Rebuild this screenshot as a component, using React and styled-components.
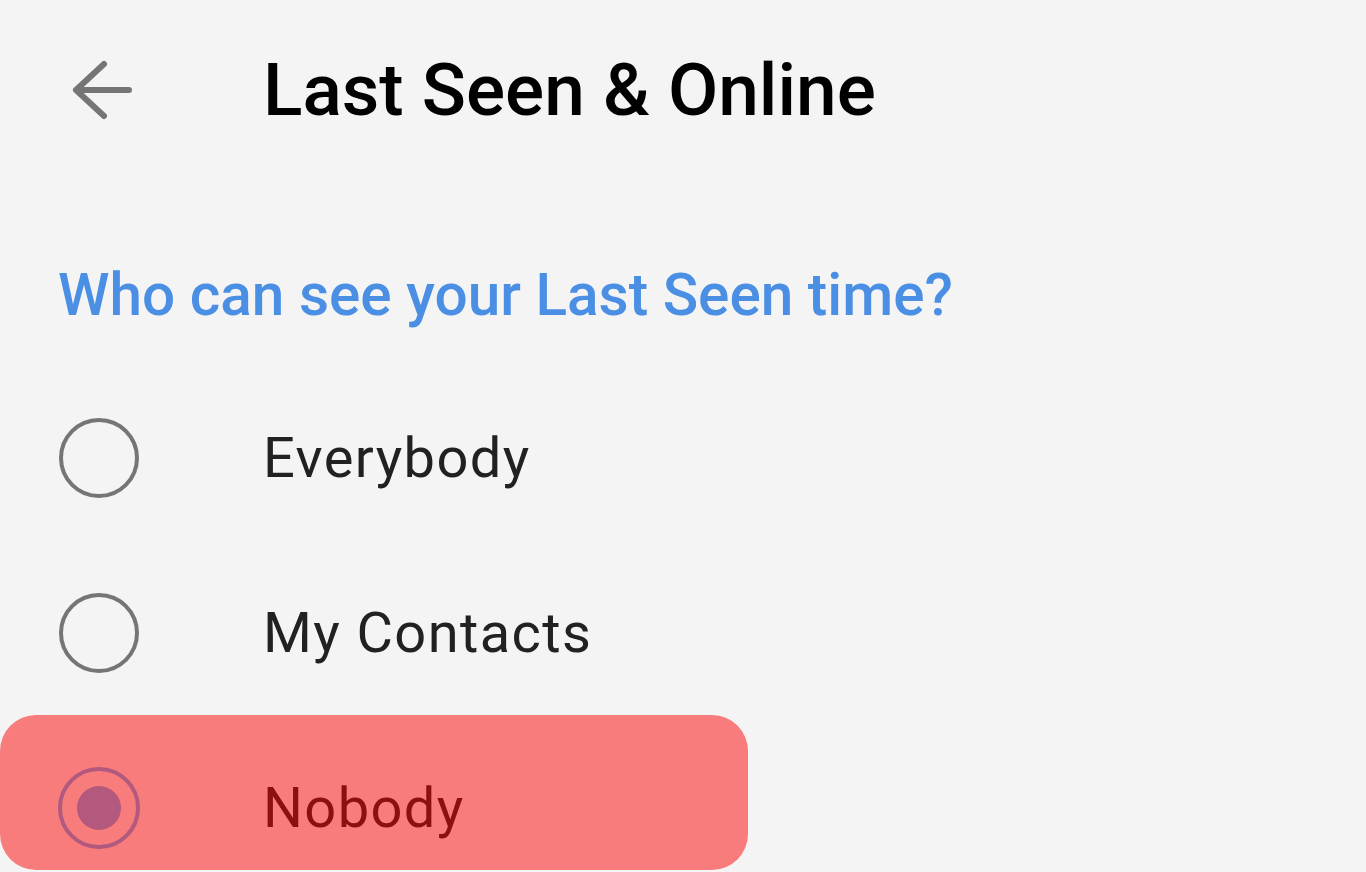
import React from "react";
import styled, { createGlobalStyle } from "styled-components";

const Global = createGlobalStyle`
  html, body {
    margin: 0;
    padding: 0;
    background: #f4f4f4;
  }
  body {
    font-family: Roboto, "Noto Sans", "Liberation Sans", sans-serif;
    overflow: hidden;
  }
`;

const Page = styled.div`
  width: 1366px;
  height: 872px;
  background: #f4f4f4;
  display: flex;
  flex-direction: column;
  overflow: hidden;
  & > * {
    flex-shrink: 0;
  }
`;

const Header = styled.header`
  height: 180px;
  display: flex;
  align-items: center;
  padding-left: 70px;
`;

const BackButton = styled.button`
  width: 64px;
  height: 64px;
  padding: 0;
  border: 0;
  background: transparent;
  display: flex;
  align-items: center;
  justify-content: center;
  cursor: pointer;
`;

const Title = styled.h1`
  margin: 0 0 0 129px;
  font-size: 73px;
  line-height: 73px;
  font-weight: 500;
  color: #000;
  letter-spacing: 0;
`;

const SectionTitle = styled.h2`
  margin: 86px 0 0 0;
  padding-left: 58px;
  font-size: 58.5px;
  line-height: 59px;
  font-weight: 500;
  color: #4a8fe4;
`;

const Options = styled.div`
  margin-top: 45px;
  display: flex;
  flex-direction: column;
`;

const Row = styled.label`
  position: relative;
  height: 175px;
  display: flex;
  align-items: center;
  padding-left: 59px;
  gap: 124px;
  cursor: pointer;
`;

const Label = styled.span`
  font-size: 56px;
  line-height: 56px;
  font-weight: 400;
  letter-spacing: 1.4px;
  color: #212121;
`;

const Highlight = styled.div`
  position: absolute;
  left: 0;
  top: -5px;
  width: 748px;
  height: 155px;
  border-radius: 36px;
  background: rgba(252, 0, 0, 0.49);
  pointer-events: none;
`;

const RadioSvg = styled.svg`
  display: block;
  width: 82px;
  height: 82px;
  margin: -1px;
`;

const Radio = ({ checked }) => (
  <RadioSvg viewBox="0 0 82 82">
    <circle
      cx="41"
      cy="41"
      r={checked ? 39 : 38}
      fill="none"
      stroke={checked ? "#6aaef5" : "#757575"}
      strokeWidth="4"
    />
    {checked && <circle cx="41" cy="41" r="22" fill="#6aaef5" />}
  </RadioSvg>
);

const BackArrow = () => (
  <svg width="64" height="64" viewBox="0 0 64 64" fill="none">
    <path
      d="M6 32H59M6 32L34 6M6 32L34 58"
      stroke="#757575"
      strokeWidth="6"
      strokeLinecap="round"
      strokeLinejoin="round"
    />
  </svg>
);

const options = [
  { label: "Everybody", checked: false },
  { label: "My Contacts", checked: false },
  { label: "Nobody", checked: true, highlight: true },
];

export default function App() {
  return (
    <>
      <Global />
      <Page>
        <Header>
          <BackButton aria-label="Back">
            <BackArrow />
          </BackButton>
          <Title>Last Seen &amp; Online</Title>
        </Header>
        <SectionTitle>Who can see your Last Seen time?</SectionTitle>
        <Options>
          {options.map((o) => (
            <Row key={o.label}>
              <Radio checked={o.checked} />
              <Label>{o.label}</Label>
              {o.highlight && <Highlight />}
            </Row>
          ))}
        </Options>
      </Page>
    </>
  );
}
